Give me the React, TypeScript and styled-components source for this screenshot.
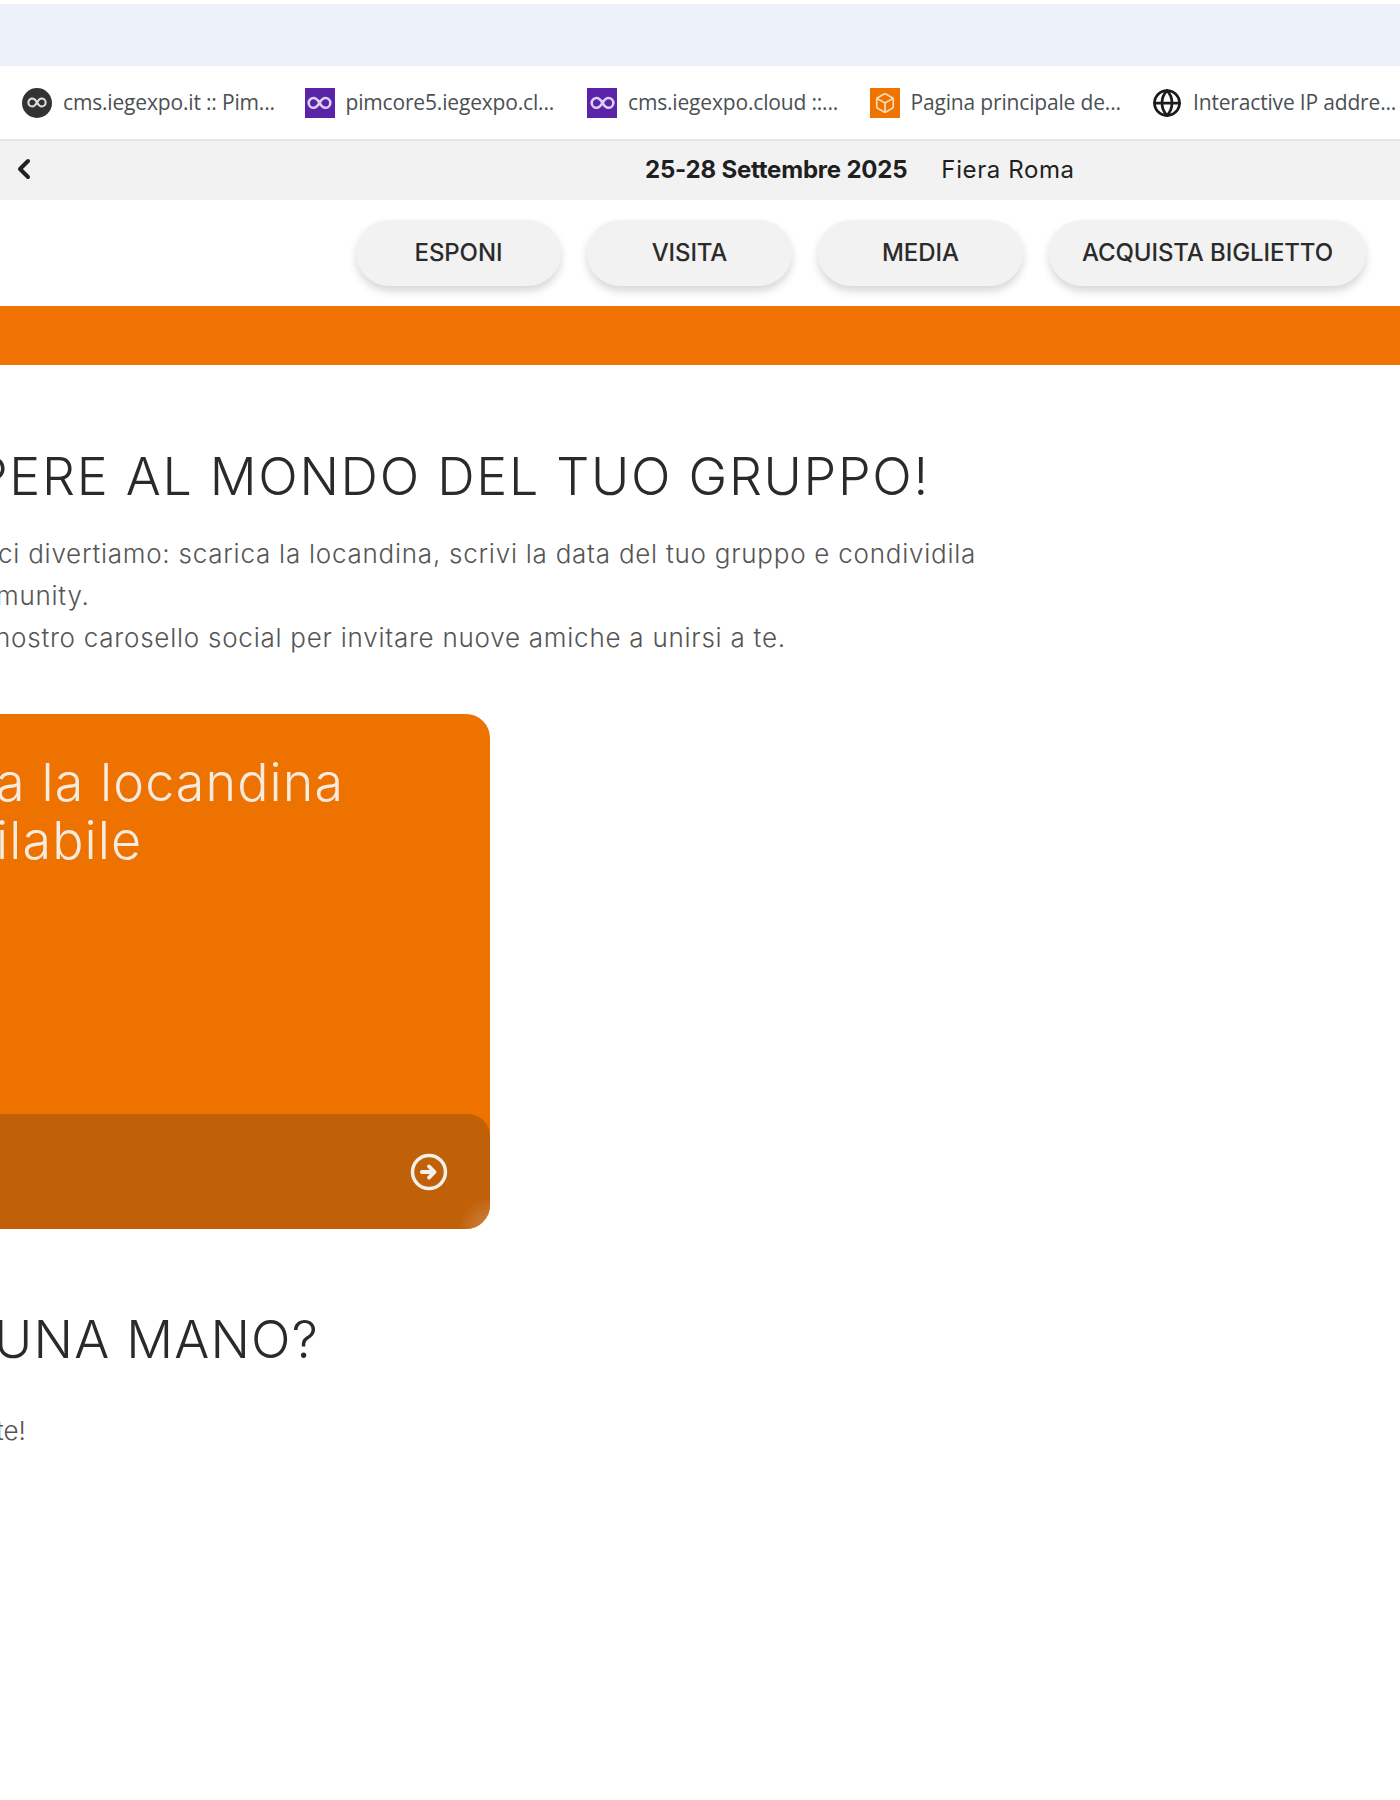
import styled, { createGlobalStyle } from "styled-components"
import { ChevronLeft, Globe, Box } from "lucide-react"

const GlobalStyle = createGlobalStyle`
  html, body {
    margin: 0;
    padding: 0;
    background: #fff;
  }
  body {
    width: 1400px;
    height: 1800px;
    overflow: hidden;
  }
`

const Page = styled.div`
  width: 1400px;
  height: 1800px;
  padding-top: 4px;
  box-sizing: border-box;
  overflow: hidden;
  font-family: Inter, "Liberation Sans", sans-serif;
`

const BrowserTop = styled.div`
  height: 62px;
  background: #ecf0f9;
`

const Bookmarks = styled.div`
  height: 73px;
  padding-left: 22px;
  display: flex;
  align-items: center;
  background: #fff;
  border-bottom: 2px solid #e4e4e4;
`

const Bookmark = styled.div`
  flex: 0 0 282.5px;
  display: flex;
  align-items: center;
  gap: 11px;
  font-family: "Open Sans", "Noto Sans", sans-serif;
  font-size: 21px;
  letter-spacing: -0.17px;
  color: #4b4f54;
  white-space: nowrap;
`

const BookmarkLabel = styled.span`
  margin-top: -2px;
`

const Favicon = styled.span<{ $bg: string; $round?: boolean }>`
  width: 30px;
  height: 30px;
  flex: none;
  display: flex;
  align-items: center;
  justify-content: center;
  background: ${p => p.$bg};
  border-radius: ${p => (p.$round ? "50%" : "0")};
`

const DateBar = styled.div`
  height: 59px;
  padding-left: 8px;
  display: flex;
  align-items: center;
  background: #f2f2f2;
  color: #1f1f1f;
  & > svg {
    flex: none;
    margin-top: -4px;
  }
`

const DateGroup = styled.div`
  margin-left: 605px;
  margin-top: -2px;
  display: flex;
  gap: 34px;
  font-size: 24px;
  letter-spacing: 0.6px;
  white-space: nowrap;
`

const DateText = styled.span`
  font-weight: 700;
  letter-spacing: -0.2px;
`

const Nav = styled.nav`
  padding: 20px 34px 20px 0;
  display: flex;
  justify-content: flex-end;
  gap: 26px;
`

const NavButton = styled.button`
  height: 66px;
  min-width: 205px;
  padding: 0 33px 2px;
  box-sizing: border-box;
  border: 0;
  border-radius: 33px;
  background: #f2f2f2;
  box-shadow: 0 5px 8px rgba(0, 0, 0, 0.16);
  font-family: inherit;
  font-size: 24px;
  font-weight: 500;
  letter-spacing: -0.1px;
  color: #2b2b2b;
  white-space: nowrap;
`

const OrangeBand = styled.div`
  height: 59px;
  background: #f27305;
`

const Content = styled.main`
  padding-top: 82px;
`

const Heading = styled.h2<{ $shift: number; $spacing: number }>`
  margin: 0 0 0 ${p => p.$shift}px;
  font-size: 52px;
  line-height: 60px;
  font-weight: 300;
  letter-spacing: ${p => p.$spacing}px;
  color: #2a2a2a;
  white-space: nowrap;
`

const Paragraph = styled.div`
  margin-top: 26px;
  font-size: 26px;
  line-height: 42px;
  font-weight: 300;
  letter-spacing: 0.75px;
  color: #555;
`

const Line = styled.div<{ $shift: number }>`
  margin-left: ${p => p.$shift}px;
  white-space: nowrap;
`

const Card = styled.section`
  width: 490px;
  height: 515px;
  margin-top: 55px;
  display: flex;
  flex-direction: column;
  justify-content: space-between;
  background: #ed7200;
  border-radius: 0 24px 24px 0;
  overflow: hidden;
`

const CardTitle = styled.div`
  padding-top: 40px;
  font-size: 52px;
  line-height: 58px;
  font-weight: 300;
  letter-spacing: 1.1px;
  color: #f6ebe0;
`

const CardFooter = styled.div`
  height: 115px;
  padding-right: 42px;
  box-sizing: border-box;
  display: flex;
  align-items: center;
  justify-content: flex-end;
  border-radius: 0 22px 0 0;
  background: radial-gradient(circle at 100% 100%, #cf8d50 0, #c8762c 14px, #c06008 32px);
  color: #f6f0ea;
`

const HelpHeading = styled(Heading)`
  margin-top: 81px;
`

const HelpText = styled(Paragraph)`
  margin-top: 40px;
  letter-spacing: 0;
`

function InfinityMark({ color, width }: { color: string; width: number }) {
  return (
    <svg width={width} height={width * 0.55} viewBox="0 0 24 14" fill="none" stroke={color} strokeWidth="2.6">
      <path d="M12 7C10 3.500 8.500 2 6 2a5 5 0 0 0 0 10c2.500 0 4-1.500 6-5zm0 0c2-3.500 3.500-5 6-5a5 5 0 0 1 0 10c-2.500 0-4-1.500-6-5z" />
    </svg>
  )
}

function ArrowCircle() {
  return (
    <svg width="38" height="38" viewBox="0 0 24 24" fill="none" stroke="currentColor" strokeLinecap="round" strokeLinejoin="round">
      <circle cx="12" cy="12" r="10.400" strokeWidth="2.200" />
      <path d="M7.500 12h8M12 8.500l3.500 3.500-3.500 3.500" strokeWidth="2.400" />
    </svg>
  )
}

export default function App() {
  return (
    <Page>
      <GlobalStyle />
      <BrowserTop />
      <Bookmarks>
        <Bookmark>
          <Favicon $bg="#333333" $round>
            <InfinityMark color="#e0e0e0" width={20} />
          </Favicon>
          <BookmarkLabel>cms.iegexpo.it :: Pim...</BookmarkLabel>
        </Bookmark>
        <Bookmark>
          <Favicon $bg="#5a23a8">
            <InfinityMark color="#dcd0f2" width={25} />
          </Favicon>
          <BookmarkLabel>pimcore5.iegexpo.cl...</BookmarkLabel>
        </Bookmark>
        <Bookmark>
          <Favicon $bg="#5a23a8">
            <InfinityMark color="#dcd0f2" width={25} />
          </Favicon>
          <BookmarkLabel>cms.iegexpo.cloud ::...</BookmarkLabel>
        </Bookmark>
        <Bookmark>
          <Favicon $bg="#ee7300">
            <Box size={22} color="#f9dcbd" strokeWidth={1.8} />
          </Favicon>
          <BookmarkLabel>Pagina principale de...</BookmarkLabel>
        </Bookmark>
        <Bookmark>
          <Globe size={30} color="#1c1c1c" strokeWidth={2.2} />
          <BookmarkLabel>Interactive IP addre...</BookmarkLabel>
        </Bookmark>
      </Bookmarks>
      <DateBar>
        <ChevronLeft size={32} color="#222" strokeWidth={3} />
        <DateGroup>
          <DateText>25-28 Settembre 2025</DateText>
          <span>Fiera Roma</span>
        </DateGroup>
      </DateBar>
      <Nav>
        <NavButton>ESPONI</NavButton>
        <NavButton>VISITA</NavButton>
        <NavButton>MEDIA</NavButton>
        <NavButton>ACQUISTA BIGLIETTO</NavButton>
      </Nav>
      <OrangeBand />
      <Content>
        <Heading $shift={-25} $spacing={1.7}>PERE AL MONDO DEL TUO GRUPPO!</Heading>
        <Paragraph>
          <Line $shift={-2}>ci divertiamo: scarica la locandina, scrivi la data del tuo gruppo e condividila</Line>
          <Line $shift={-4}>munity.</Line>
          <Line $shift={-5}>nostro carosello social per invitare nuove amiche a unirsi a te.</Line>
        </Paragraph>
        <Card>
          <CardTitle>
            <Line $shift={-4}>a la locandina</Line>
            <Line $shift={-4}>ilabile</Line>
          </CardTitle>
          <CardFooter>
            <ArrowCircle />
          </CardFooter>
        </Card>
        <HelpHeading $shift={-6} $spacing={1.2}>UNA MANO?</HelpHeading>
        <HelpText>
          <Line $shift={-4}>te!</Line>
        </HelpText>
      </Content>
    </Page>
  )
}
